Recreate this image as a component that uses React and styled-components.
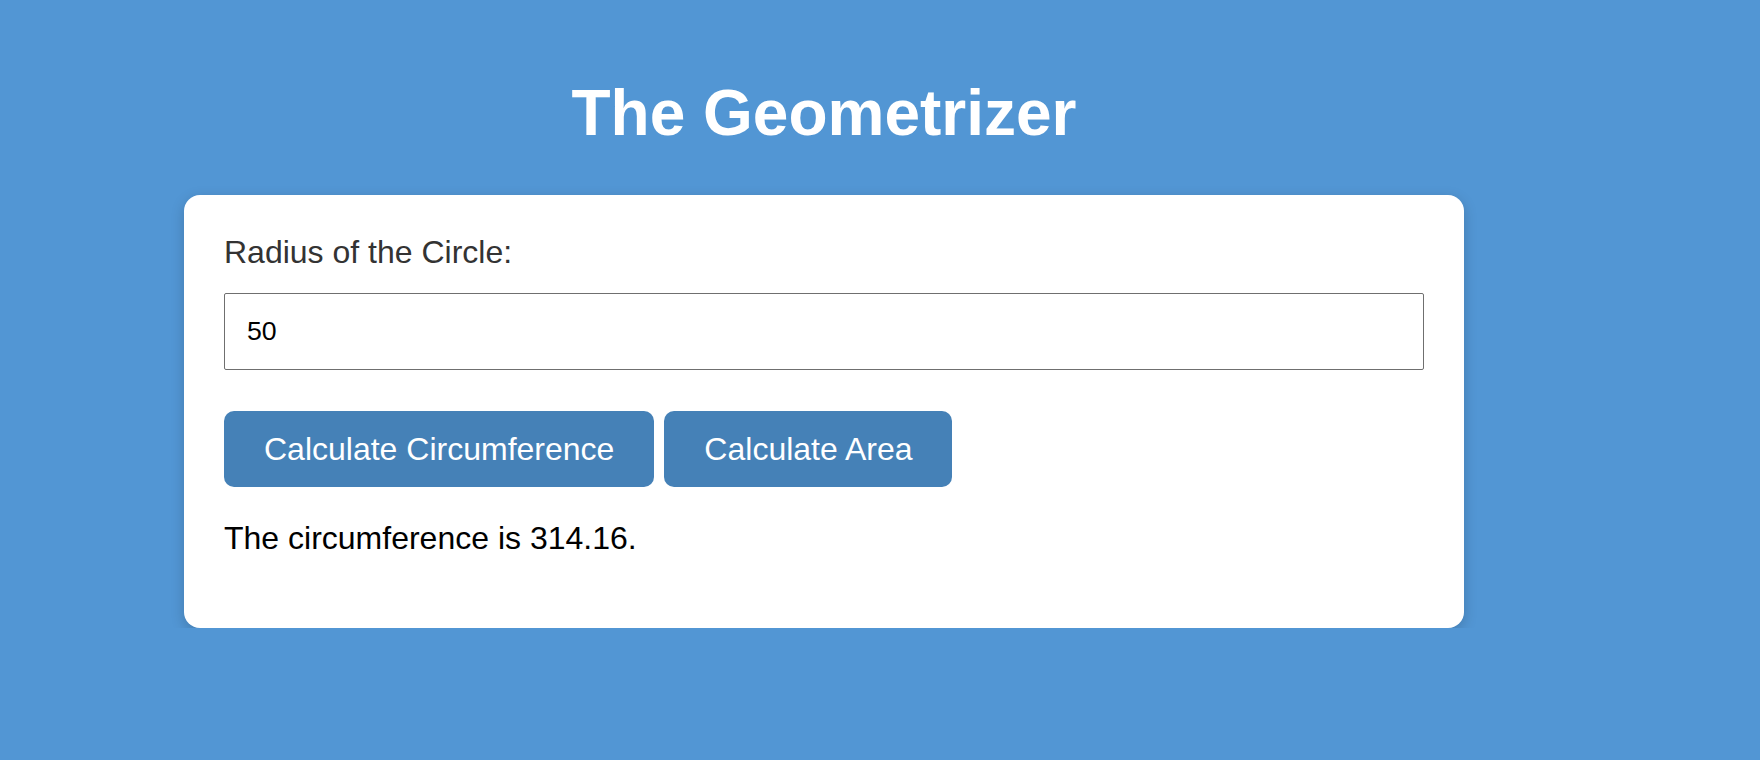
import { useState } from "react";
import styled, { createGlobalStyle } from "styled-components";

const GlobalStyle = createGlobalStyle`
  body {
    margin: 0;
    background-color: #5296d4;
    font-family: 'Liberation Sans', Arial, sans-serif;
  }
`;

const Page = styled.div`
  width: 1280px;
  margin-left: 184px;
  padding-top: 76px;
`;

const Title = styled.h1`
  margin: 0 0 45px;
  font-size: 64px;
  line-height: 74px;
  font-weight: bold;
  color: white;
  text-align: center;
`;

const Card = styled.div`
  background-color: white;
  border-radius: 16px;
  padding: 39px 40px 40px;
  box-shadow: 0 4px 14px rgba(0, 0, 0, 0.18);
`;

const Label = styled.label`
  display: block;
  font-size: 32px;
  line-height: 37px;
  color: #333;
  margin-bottom: 22px;
`;

const RadiusInput = styled.input`
  display: block;
  box-sizing: border-box;
  width: 100%;
  height: 77px;
  margin: 0 0 41px;
  padding: 0 22px;
  border: 1px solid #6f6f6f;
  border-radius: 2px;
  font-family: 'Liberation Sans', Arial, sans-serif;
  font-size: 26.7px;
  color: black;
  outline: none;
`;

const ButtonRow = styled.div`
  display: flex;
  gap: 10px;
`;

const ActionButton = styled.button`
  height: 76px;
  padding: 0 40px;
  border: none;
  border-radius: 10px;
  background-color: #4581b7;
  color: white;
  font-family: 'Liberation Sans', Arial, sans-serif;
  font-size: 32px;
  cursor: pointer;
`;

const Result = styled.p`
  margin: 33px 0 31px;
  font-size: 32px;
  line-height: 37px;
  color: black;
`;

const App = () => {
  const [radius, setRadius] = useState('50');
  const [result, setResult] = useState('The circumference is 314.16.');

  const calcCircumference = () => {
    const value = 2 * Math.PI * parseFloat(radius);
    setResult(`The circumference is ${value.toFixed(2)}.`);
  };

  const calcArea = () => {
    const value = Math.PI * parseFloat(radius) ** 2;
    setResult(`The area is ${value.toFixed(2)}.`);
  };

  return (
    <>
      <GlobalStyle />
      <Page>
        <Title>The Geometrizer</Title>
        <Card>
          <Label htmlFor="radius">Radius of the Circle:</Label>
          <RadiusInput
            id="radius"
            value={radius}
            onChange={(e) => setRadius(e.target.value)}
          />
          <ButtonRow>
            <ActionButton onClick={calcCircumference}>Calculate Circumference</ActionButton>
            <ActionButton onClick={calcArea}>Calculate Area</ActionButton>
          </ButtonRow>
          <Result>{result}</Result>
        </Card>
      </Page>
    </>
  );
};

export default App;
